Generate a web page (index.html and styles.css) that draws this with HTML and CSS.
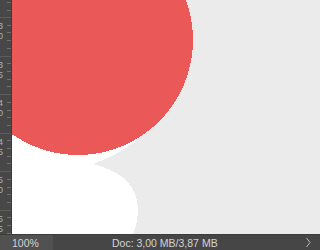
FILE: index.html
```html
<!DOCTYPE html>
<html>
<head>
<meta charset="utf-8">
<link rel="stylesheet" href="styles.css">
</head>
<body>
<div class="app">
  <div class="workarea">
    <svg class="ruler" width="12" height="234" viewBox="0 0 12 234" shape-rendering="crispEdges">
      <rect x="0" y="0" width="11" height="234" fill="#474747"/>
      <rect x="11" y="0" width="1" height="234" fill="#3b3b3b"/>
      <g fill="#707070">
        <rect x="7" y="2" width="4" height="1"/>
        <rect x="7" y="10" width="4" height="1"/>
        <rect x="0" y="17" width="11" height="1" fill="#5e5e5e"/>
        <rect x="7" y="25" width="4" height="1"/>
        <rect x="7" y="32" width="4" height="1"/>
        <rect x="7" y="40" width="4" height="1"/>
        <rect x="7" y="48" width="4" height="1"/>
        <rect x="0" y="56" width="11" height="1" fill="#5e5e5e"/>
        <rect x="7" y="63" width="4" height="1"/>
        <rect x="7" y="71" width="4" height="1"/>
        <rect x="7" y="79" width="4" height="1"/>
        <rect x="7" y="86" width="4" height="1"/>
        <rect x="0" y="94" width="11" height="1" fill="#5e5e5e"/>
        <rect x="7" y="102" width="4" height="1"/>
        <rect x="7" y="110" width="4" height="1"/>
        <rect x="7" y="117" width="4" height="1"/>
        <rect x="7" y="125" width="4" height="1"/>
        <rect x="0" y="133" width="11" height="1" fill="#5e5e5e"/>
        <rect x="7" y="140" width="4" height="1"/>
        <rect x="7" y="148" width="4" height="1"/>
        <rect x="7" y="156" width="4" height="1"/>
        <rect x="7" y="163" width="4" height="1"/>
        <rect x="0" y="171" width="11" height="1" fill="#5e5e5e"/>
        <rect x="7" y="179" width="4" height="1"/>
        <rect x="7" y="187" width="4" height="1"/>
        <rect x="7" y="194" width="4" height="1"/>
        <rect x="7" y="202" width="4" height="1"/>
        <rect x="0" y="210" width="11" height="1" fill="#5e5e5e"/>
        <rect x="7" y="217" width="4" height="1"/>
        <rect x="7" y="225" width="4" height="1"/>
        <rect x="7" y="233" width="4" height="1"/>
      </g>
      <g class="ruler-label">
        <text x="-2" y="28.5">3</text><text x="-2" y="38.5">0</text>
        <text x="-2" y="67.5">3</text><text x="-2" y="77.5">5</text>
        <text x="-2" y="105.5">4</text><text x="-2" y="115.5">0</text>
        <text x="-2" y="144.5">4</text><text x="-2" y="154.5">5</text>
        <text x="-2" y="182.5">5</text><text x="-2" y="192.5">0</text>
        <text x="-2" y="221.5">5</text><text x="-2" y="231.5">5</text>
      </g>
    </svg>
    <div class="canvas-wrap">
      <svg class="canvas" width="280" height="234" viewBox="12 0 280 234">
        <rect x="12" y="0" width="280" height="234" fill="#ebebeb"/>
        <path shape-rendering="crispEdges" fill="#ffffff" d="M12,110 L150,110 L141,136 Q125,152 93,164 Q115,170 126,180 Q137,192 138,208 Q138,222 133,234 L12,234 Z"/>
        <circle shape-rendering="crispEdges" cx="78" cy="40" r="115" fill="#eb5858"/>
      </svg>
    </div>
  </div>
  <div class="statusbar">
    <div class="zoomlevel">100%</div>
    <div class="docinfo">Doc: 3,00 MB/3,87 MB</div>
    <svg class="chevron" width="10" height="16" viewBox="0 0 10 16">
      <polyline points="3.5,4 7,8.5 3.5,13" fill="none" stroke="#b8b8b8" stroke-width="1"/>
    </svg>
  </div>
</div>
</body>
</html>
```
FILE: styles.css
```css
html, body {
  margin: 0;
  padding: 0;
  background: #ebebeb;
}
.app {
  width: 100%;
  min-width: 292px;
  height: 250px;
  display: flex;
  flex-direction: column;
  overflow: hidden;
}
.workarea {
  display: flex;
  height: 234px;
}
.ruler, .canvas {
  display: block;
  flex: none;
}
.canvas-wrap {
  flex: 1;
  background: #ebebeb;
}
.ruler-label text {
  font-family: "Liberation Sans", Arial, sans-serif;
  font-size: 9px;
  fill: #a9b3be;
}
.statusbar {
  height: 16px;
  display: flex;
  align-items: stretch;
  background: #464646;
  box-sizing: border-box;
  border-top: 1px solid #3c3c3c;
  font-family: "Liberation Sans", Arial, sans-serif;
  font-size: 10.5px;
  color: #d2d4d6;
}
.zoomlevel {
  width: 53px;
  box-sizing: border-box;
  padding-left: 12px;
  background: #515151;
  display: flex;
  align-items: center;
}
.docinfo {
  flex: 1;
  padding-left: 59px;
  display: flex;
  align-items: center;
}
.chevron {
  display: block;
  margin-right: 7px;
  margin-top: -1px;
}
```
